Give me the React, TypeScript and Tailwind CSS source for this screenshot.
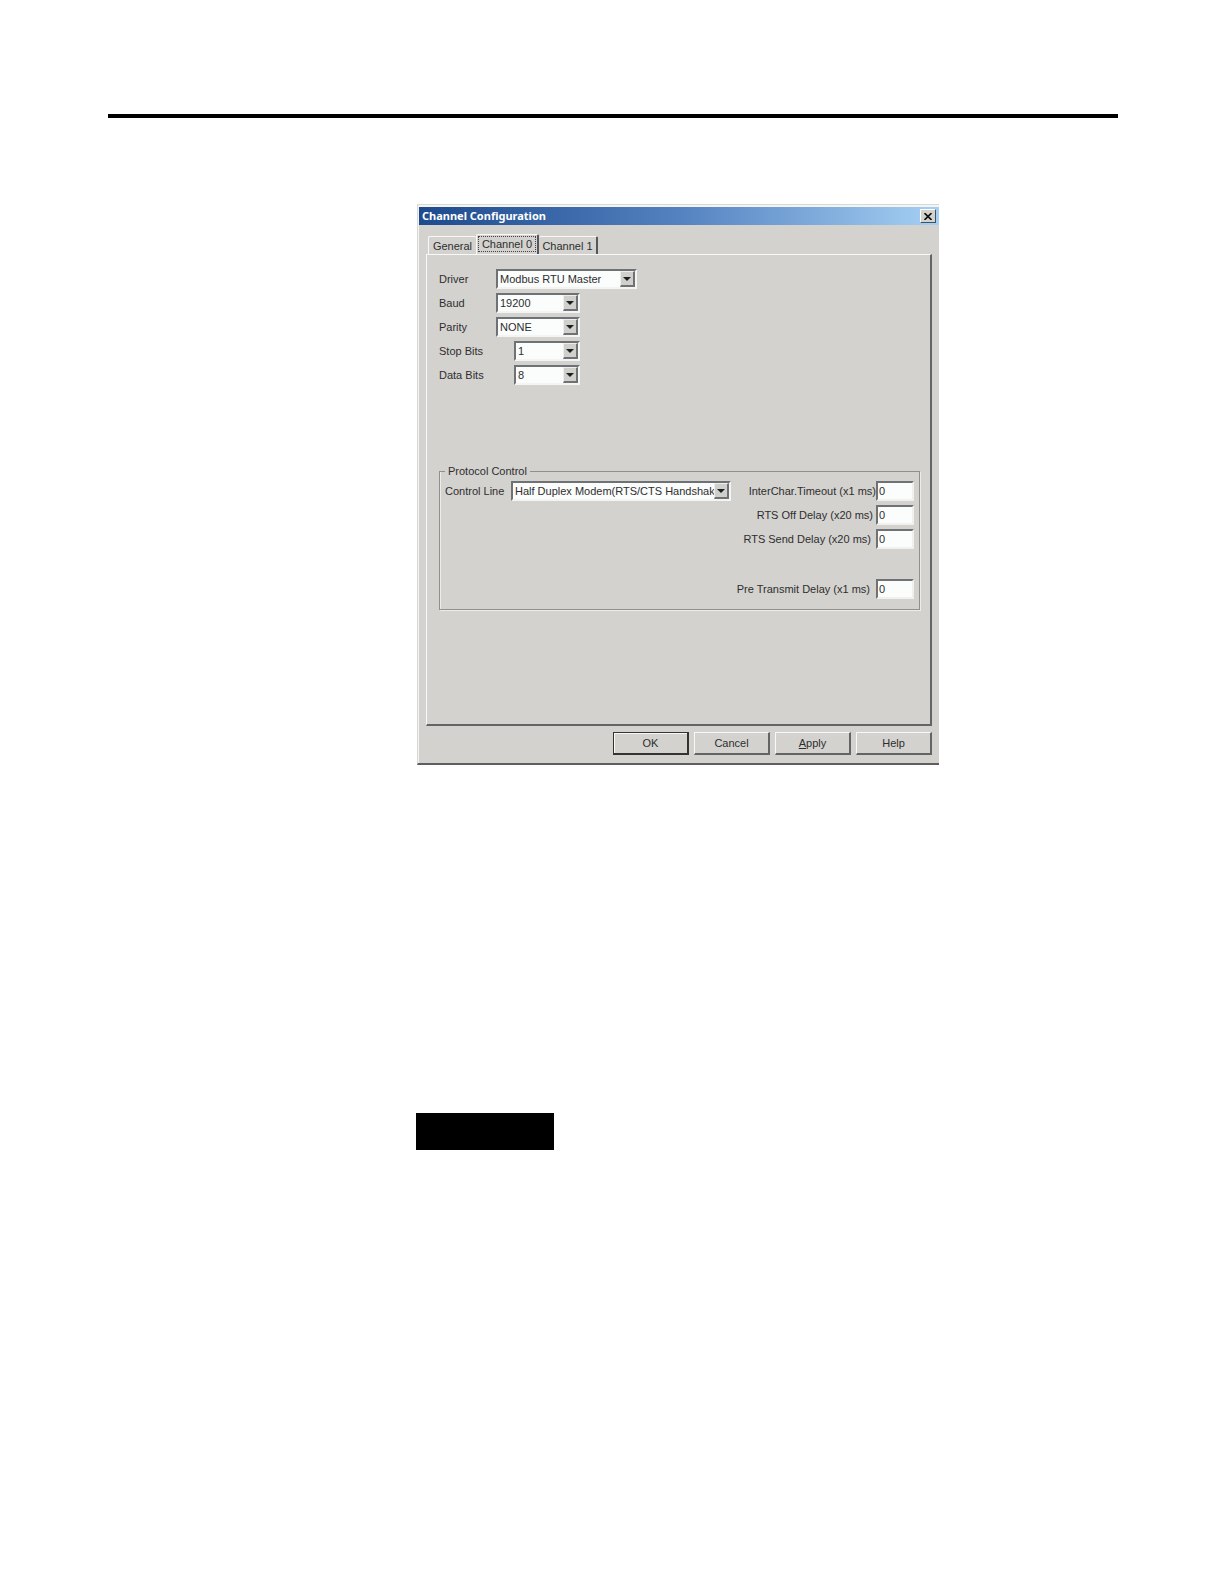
import React, { useState } from "react";

const tabs = ["General", "Channel 0", "Channel 1"];

interface ComboProps {
  id: string;
  options: string[];
  className?: string;
}

function Combo({ id, options, className = "" }: ComboProps) {
  const [value, setValue] = useState(options[0]);

  return (
    <div className={`relative h-5 ${className}`}>
      <select
        id={id}
        value={value}
        onChange={(e) => setValue(e.target.value)}
        className="block h-full w-full appearance-none overflow-hidden whitespace-nowrap border-2 border-t-[#6f7274] border-l-[#6f7274] border-r-[#f4f4f2] border-b-[#f4f4f2] bg-[#fbfcfc] pl-[2px] pr-[14px] leading-4 outline-none"
      >
        {options.map((option) => (
          <option key={option}>{option}</option>
        ))}
      </select>
      <span className="pointer-events-none absolute top-[2px] right-[2px] bottom-[2px] flex w-[15px] items-center justify-center border-t border-l border-r-2 border-b-2 border-t-[#eeeeec] border-l-[#eeeeec] border-r-[#6f7274] border-b-[#6f7274] bg-[#cfcfcb]">
        <svg width="8" height="4" viewBox="0 0 8 4" aria-hidden="true">
          <path d="M0 0h8L4 4z" fill="#1c1f22" />
        </svg>
      </span>
    </div>
  );
}

const lineSettings = [
  {
    id: "driver",
    label: "Driver",
    options: ["Modbus RTU Master"],
    width: "w-[141px]",
  },
  { id: "baud", label: "Baud", options: ["19200"], width: "w-[84px]" },
  { id: "parity", label: "Parity", options: ["NONE"], width: "w-[84px]" },
  {
    id: "stop-bits",
    label: "Stop Bits",
    options: ["1"],
    width: "ml-[18px] w-[66px]",
  },
  {
    id: "data-bits",
    label: "Data Bits",
    options: ["8"],
    width: "ml-[18px] w-[66px]",
  },
];

const delays = [
  { id: "inter-char", label: "InterChar.Timeout (x1 ms)", pad: "pr-0" },
  { id: "rts-off", label: "RTS Off Delay (x20 ms)", pad: "pr-[3px]" },
  { id: "rts-send", label: "RTS Send Delay (x20 ms)", pad: "pr-[5px]" },
  { id: "pre-transmit", label: "Pre Transmit Delay (x1 ms)", pad: "pr-[6px]" },
];

const actions = ["OK", "Cancel", "Apply", "Help"];

export default function App() {
  const [activeTab, setActiveTab] = useState("Channel 0");
  const [values, setValues] = useState<Record<string, string>>({});

  return (
    <div className="min-h-screen bg-white pt-[114px] pr-[106px] pl-[108px]">
      <hr className="h-1 border-0 bg-black" />
      <main className="pt-[86px] pl-[309px]">
        <section
          aria-labelledby="dialog-title"
          className="w-full max-w-[522px] border-t border-l border-b-2 border-t-[#d8d8d6] border-l-[#d8d8d6] border-b-[#5c5e5f] bg-[#d3d2ce] font-['Liberation_Sans',sans-serif] text-[11px] leading-4 whitespace-nowrap text-[#2e2e2e]"
        >
          <header className="flex h-5 items-center justify-between border-t-2 border-l border-t-[#f4f4f2] border-l-[#f4f4f2] bg-linear-to-r from-[#1d4a8c] via-[#5482c0] to-[#a6d0f3] pr-[3px] pl-[3px]">
            <h1
              id="dialog-title"
              className="font-['Noto_Sans',sans-serif] text-[11px] font-bold text-white"
            >
              Channel Configuration
            </h1>
            <button
              aria-label="Close"
              className="flex h-[14px] w-4 items-center justify-center border border-t-white border-l-white border-r-[#3c5364] border-b-[#3c5364] bg-[#d3d2ce]"
            >
              <svg width="8" height="7" viewBox="0 0 8 7" aria-hidden="true">
                <path
                  d="M.5 0 7.5 7M7.5 0 .5 7"
                  stroke="#111"
                  strokeWidth="1.6"
                />
              </svg>
            </button>
          </header>

          <div className="border-l border-l-[#f4f4f2] pt-[9px] pr-[7px] pb-2 pl-[7px]">
            <div role="tablist" className="flex items-end pl-[2px]">
              {tabs.map((tab) => (
                <button
                  key={tab}
                  role="tab"
                  aria-selected={tab === activeTab}
                  onClick={() => setActiveTab(tab)}
                  className={
                    tab === activeTab
                      ? "h-5 w-[63px] rounded-t-xs border-t border-l border-r-2 border-t-[#f8f8f6] border-l-[#f8f8f6] border-r-[#55585a] px-px pb-[2px]"
                      : tab === "General"
                        ? "h-[18px] w-[48px] rounded-t-xs border-t border-l border-t-[#f8f8f6] border-l-[#f8f8f6]"
                        : "h-[18px] w-[59px] rounded-t-xs border-t border-r-2 border-t-[#f8f8f6] border-r-[#55585a]"
                  }
                >
                  <span
                    className={
                      tab === activeTab
                        ? "block border border-dotted border-[#444] leading-[14px]"
                        : "block"
                    }
                  >
                    {tab}
                  </span>
                </button>
              ))}
            </div>

            <div
              role="tabpanel"
              className="border-t border-l border-r-2 border-b-2 border-t-[#f8f8f6] border-l-[#f8f8f6] border-r-[#626465] border-b-[#626465] pt-[14px] pr-[10px] pb-[114px] pl-3"
            >
              <div className="flex flex-col gap-1">
                {lineSettings.map(({ id, label, options, width }) => (
                  <div key={id} className="flex items-center">
                    <label htmlFor={id} className="w-[57px]">
                      {label}
                    </label>
                    <Combo id={id} options={options} className={width} />
                  </div>
                ))}
              </div>

              <fieldset className="mt-[78px] border border-[#8e8f8e] pr-[5px] pb-[10px] pl-[5px] shadow-[1px_1px_0_#ececea,inset_1px_0_0_#ececea]">
                <legend className="px-[3px]">Protocol Control</legend>
                <div className="flex items-start justify-between pt-[2px]">
                  <div className="flex items-center">
                    <label htmlFor="control-line" className="w-[66px]">
                      Control Line
                    </label>
                    <Combo
                      id="control-line"
                      options={["Half Duplex Modem(RTS/CTS Handshak"]}
                      className="w-[220px]"
                    />
                  </div>
                  <div className="flex flex-col gap-1">
                    {delays.map(({ id, label, pad }) => (
                      <div
                        key={id}
                        className="flex items-center justify-end last:mt-[26px]"
                      >
                        <label htmlFor={id} className={pad}>
                          {label}
                        </label>
                        <input
                          id={id}
                          type="text"
                          value={values[id] ?? "0"}
                          onChange={(e) =>
                            setValues({ ...values, [id]: e.target.value })
                          }
                          className="h-5 w-[38px] border-2 border-t-[#6f7274] border-l-[#6f7274] border-r-[#f0f0ee] border-b-[#f0f0ee] bg-[#fbfcfc] pl-px outline-none"
                        />
                      </div>
                    ))}
                  </div>
                </div>
              </fieldset>
            </div>

            <div className="mt-[6px] flex justify-end gap-[5px]">
              {actions.map((action) => (
                <button
                  key={action}
                  className={
                    action === "OK"
                      ? "h-[23px] w-[76px] border-t border-l border-r-2 border-b-2 border-[#333] shadow-[inset_1px_1px_0_#f8f8f6]"
                      : "h-[23px] w-[76px] border-t border-l border-r-2 border-b-2 border-t-[#f8f8f6] border-l-[#f8f8f6] border-r-[#626465] border-b-[#626465]"
                  }
                >
                  {action === "Apply" ? (
                    <>
                      <span className="underline">A</span>pply
                    </>
                  ) : (
                    action
                  )}
                </button>
              ))}
            </div>
          </div>
        </section>

        <div className="mt-[348px] -ml-px h-[37px] w-[138px] bg-black" />
      </main>
    </div>
  );
}
